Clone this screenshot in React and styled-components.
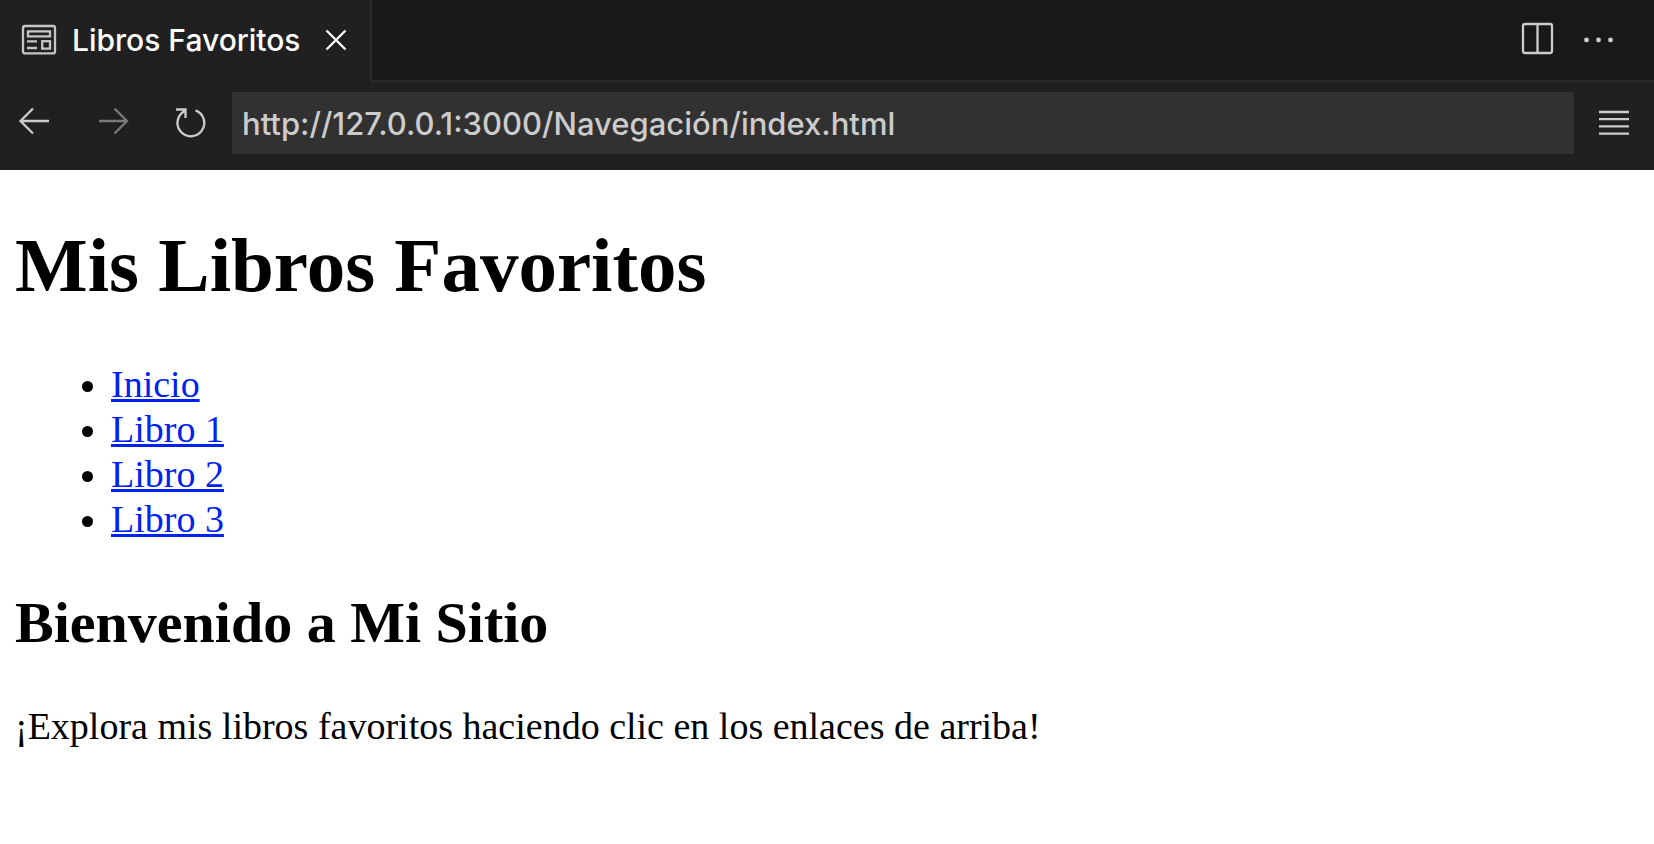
import React from "react";
import styled, { createGlobalStyle } from "styled-components";

const GlobalStyle = createGlobalStyle`
  * { box-sizing: border-box; }
  body {
    margin: 0;
    background: #ffffff;
    color: #000000;
    font-family: "Liberation Serif", "Times New Roman", serif;
  }
`;

const Chrome = styled.header`
  background: #202020;
  font-family: Inter, "Liberation Sans", sans-serif;
  font-size: 31px;
  font-weight: 500;
`;

const TabBar = styled.div`
  display: flex;
  height: 82px;
`;

const Tab = styled.div`
  display: flex;
  align-items: center;
  width: 372px;
  padding: 0 14px 2px 20px;
  background: #202020;
  border-right: 2px solid #2b2b2b;
  color: #ffffff;
`;

const TabTitle = styled.span`
  flex: 1;
  padding-left: 14px;
  font-size: 30px;
  line-height: 40px;
  white-space: nowrap;
`;

const TabActions = styled.div`
  flex: 1;
  display: flex;
  align-items: center;
  justify-content: flex-end;
  gap: 20px;
  padding-right: 35px;
  background: #181818;
  border-bottom: 2px solid #2b2b2b;
`;

const IconButton = styled.button`
  display: flex;
  align-items: center;
  justify-content: center;
  flex: none;
  width: 40px;
  height: 40px;
  padding: 0;
  border: 0;
  background: transparent;
  color: ${(p) => p.$color || "#cccccc"};
  cursor: pointer;
  &:disabled { cursor: default; }
`;

const Toolbar = styled.form`
  display: flex;
  align-items: center;
  gap: 20px;
  padding: 10px 20px 16px 14px;
`;

const NavButtons = styled.div`
  display: flex;
  gap: 39px;
`;

const Address = styled.input`
  flex: 1;
  min-width: 0;
  height: 62px;
  padding: 0 10px;
  border: 0;
  border-radius: 0;
  outline: 0;
  background: #313131;
  color: #cccccc;
  font: inherit;
`;

const Page = styled.main`
  padding: 51px 15px;
  font-size: 38px;
  line-height: 45px;
`;

const Title = styled.h1`
  margin: 0 0 53px;
  font-size: 77px;
  line-height: 88px;
`;

const LinkList = styled.ul`
  margin: 0 0 48px;
  padding-left: 96px;
`;

const PageLink = styled.a`
  color: #0022ee;
  text-decoration-thickness: 3px;
`;

const Subtitle = styled.h2`
  margin: 0 0 48px;
  font-size: 58px;
  line-height: 66px;
`;

const Text = styled.p`
  margin: 0;
`;

const Icon = ({ children, size = 40, width = 2.3 }) => (
  <svg
    width={size}
    height={size}
    viewBox={`0 0 ${size} ${size}`}
    fill="none"
    stroke="currentColor"
    strokeWidth={width}
    aria-hidden="true"
  >
    {children}
  </svg>
);

const PreviewIcon = styled.svg`
  flex: none;
  color: #c5c5c5;
`;

const links = ["Inicio", "Libro 1", "Libro 2", "Libro 3"];

export default function App() {
  return (
    <>
      <GlobalStyle />
      <Chrome>
        <TabBar>
          <Tab>
            <PreviewIcon width="38" height="40" viewBox="0 0 38 40" fill="none" stroke="currentColor" strokeWidth="2.3" aria-hidden="true">
              <rect x="3" y="6" width="32" height="27.4" rx="2" />
              <rect x="8" y="11.4" width="22" height="5" />
              <path d="M7 21.3h10M7 28h10" />
              <rect x="22.2" y="21.2" width="7.8" height="7.4" />
            </PreviewIcon>
            <TabTitle>Libros Favoritos</TabTitle>
            <IconButton type="button" aria-label="Cerrar" $color="#ffffff">
              <Icon>
                <path d="M10.5 10.5l19 19M29.5 10.5l-19 19" />
              </Icon>
            </IconButton>
          </Tab>
          <TabActions>
            <IconButton type="button" aria-label="Dividir editor">
              <Icon>
                <rect x="4" y="4" width="29" height="29" rx="2" />
                <path d="M18.5 4v29" />
              </Icon>
            </IconButton>
            <IconButton type="button" aria-label="Más acciones">
              <Icon>
                <g fill="currentColor" stroke="none">
                  <circle cx="7.5" cy="20" r="2.4" />
                  <circle cx="19.5" cy="20" r="2.4" />
                  <circle cx="31.5" cy="20" r="2.4" />
                </g>
              </Icon>
            </IconButton>
          </TabActions>
        </TabBar>
        <Toolbar onSubmit={(e) => e.preventDefault()}>
          <NavButtons>
            <IconButton type="button" aria-label="Atrás">
              <Icon>
                <path d="M35 18H7M19 5.5L6.5 18L19 30.5" />
              </Icon>
            </IconButton>
            <IconButton type="button" aria-label="Adelante" disabled $color="#7a7a7a">
              <Icon>
                <path d="M6 18h28M21.5 5.5L34 18L21.5 30.5" />
              </Icon>
            </IconButton>
            <IconButton type="button" aria-label="Recargar">
              <Icon>
                <path d="M4 6.5h9.5V15M13.5 7.6A13.4 13.4 0 1 0 23.5 7.3" />
              </Icon>
            </IconButton>
          </NavButtons>
          <Address type="text" aria-label="Dirección" defaultValue="http://127.0.0.1:3000/Navegación/index.html" />
          <IconButton type="button" aria-label="Menú">
            <Icon>
              <path d="M5 9h30M5 16.2h30M5 23.4h30M5 30.6h30" />
            </Icon>
          </IconButton>
        </Toolbar>
      </Chrome>
      <Page>
        <Title>Mis Libros Favoritos</Title>
        <nav>
          <LinkList>
            {links.map((label) => (
              <li key={label}>
                <PageLink href="#">{label}</PageLink>
              </li>
            ))}
          </LinkList>
        </nav>
        <Subtitle>Bienvenido a Mi Sitio</Subtitle>
        <Text>¡Explora mis libros favoritos haciendo clic en los enlaces de arriba!</Text>
      </Page>
    </>
  );
}
